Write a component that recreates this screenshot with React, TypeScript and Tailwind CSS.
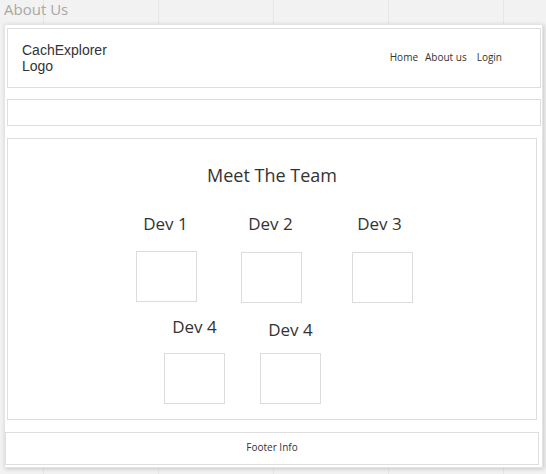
import React from "react";

const os = { fontFamily: '"Open Sans", "Liberation Sans", sans-serif' };

function Dev({ label, mt, mb, shift = "" }: { label: string; mt: string; mb: string; shift?: string }) {
  return (
    <div className="flex w-[61px] flex-col items-center">
      <div className={`text-[17px] leading-[22px] text-[#333] whitespace-nowrap ${mt} ${mb} ${shift}`} style={os}>
        {label}
      </div>
      <div className="h-[51px] w-[61px] border border-[#dcdcdc] bg-white" />
    </div>
  );
}

export default function App() {
  return (
    <div className="relative h-[474px] w-[546px] overflow-hidden bg-[#f2f2f2] bg-[repeating-linear-gradient(90deg,transparent_0,transparent_43px,#e6e6e6_43px,#e6e6e6_44px,transparent_44px,transparent_115px)]">
      <div
        className="h-[24px] pl-[4px] text-[15px] leading-[19px] text-[#a8a8a8]"
        style={os}
      >
        About Us
      </div>
      <div className="ml-[4px] flex h-[444px] w-[539px] flex-col border border-[#e4e4e4] bg-white shadow-[1px_1px_4px_rgba(0,0,0,0.18)]">
        <div className="ml-[2px] mt-[3px] flex h-[60px] w-[534px] items-center justify-between border border-[#dedede] pl-[14px] pr-[38px]">
          <div
            className="text-[14px] leading-[16px] text-[#333]"
            style={{ fontFamily: '"Liberation Sans", Arial, sans-serif' }}
          >
            CachExplorer
            <br />
            Logo
          </div>
          <div className="mb-[2px] flex gap-[7px] text-[10px] text-[#333]" style={os}>
            <span>Home</span>
            <span className="mr-[3px]">About us</span>
            <span>Login</span>
          </div>
        </div>
        <div className="ml-[2px] mt-[11px] h-[27px] w-[534px] border border-[#dedede]" />
        <div className="ml-[2px] mt-[12px] flex h-[282px] w-[530px] flex-col items-center border border-[#dedede]">
          <div className="mt-[24px] text-[18px] leading-[24px] text-[#333]" style={os}>
            Meet The Team
          </div>
          <div className="mt-[26px] flex w-full pl-[128px]">
            <Dev label="Dev 1" mt="mt-[0px]" mb="mb-[16px]" shift="mr-[2px]" />
            <div className="w-[44px]" />
            <Dev label="Dev 2" mt="mt-[0px]" mb="mb-[17px]" shift="mr-[2px]" />
            <div className="w-[50px]" />
            <Dev label="Dev 3" mt="mt-[0px]" mb="mb-[17px]" shift="mr-[6px]" />
          </div>
          <div className="flex w-full items-end pl-[156px]">
            <Dev label="Dev 4" mt="mt-[13px]" mb="mb-[15px]" />
            <div className="w-[35px]" />
            <Dev label="Dev 4" mt="mt-[16px]" mb="mb-[12px]" />
          </div>
        </div>
        <div className="mt-[12px] flex h-[33px] w-[534px] items-center justify-center border border-[#dedede] pb-[4px] text-[10px] leading-[14px] text-[#333]" style={os}>
          Footer Info
        </div>
      </div>
    </div>
  );
}
